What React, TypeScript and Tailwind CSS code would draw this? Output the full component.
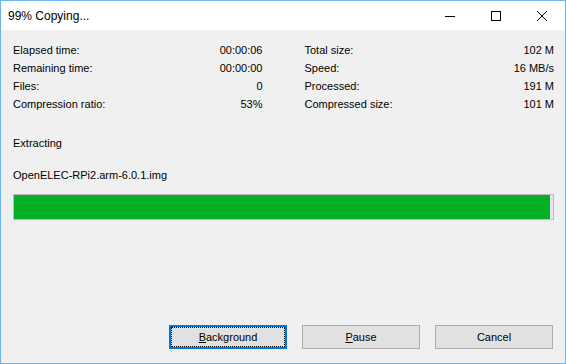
import React from 'react';

const font = { fontFamily: '"Liberation Sans", Arial, sans-serif' };

const leftRows: [string, string][] = [
  ['Elapsed time:', '00:00:06'],
  ['Remaining time:', '00:00:00'],
  ['Files:', '0'],
  ['Compression ratio:', '53%'],
];

const rightRows: [string, string][] = [
  ['Total size:', '102 M'],
  ['Speed:', '16 MB/s'],
  ['Processed:', '191 M'],
  ['Compressed size:', '101 M'],
];

const StatColumn: React.FC<{ rows: [string, string][] }> = ({ rows }) => (
  <div className="flex flex-col">
    {rows.map(([label, value]) => (
      <div key={label} className="flex h-[18px] items-center justify-between">
        <span>{label}</span>
        <span>{value}</span>
      </div>
    ))}
  </div>
);

export default function App() {
  return (
    <div
      className="flex h-[364px] w-[566px] flex-col border border-[#6DB5EC] bg-[#F0F0F0] text-[11px] text-black"
      style={font}
    >
      {/* title bar */}
      <div className="flex h-[29px] shrink-0 items-center bg-white">
        <span className="ml-[7px] text-[12px]">99% Copying...</span>
        <div className="ml-auto flex h-full items-center">
          <div className="flex h-full w-[46px] items-center justify-center">
            <svg width="10" height="10" viewBox="0 0 10 10">
              <path d="M0 5.5H10" stroke="#000" strokeWidth="1" />
            </svg>
          </div>
          <div className="flex h-full w-[46px] items-center justify-center">
            <svg width="10" height="10" viewBox="0 0 10 10">
              <rect x="0.5" y="0.5" width="9" height="9" fill="none" stroke="#000" strokeWidth="1" />
            </svg>
          </div>
          <div className="flex h-full w-[46px] items-center justify-center">
            <svg width="10" height="10" viewBox="0 0 10 10">
              <path d="M0 0L10 10M10 0L0 10" stroke="#000" strokeWidth="1" />
            </svg>
          </div>
        </div>
      </div>

      {/* body */}
      <div className="flex flex-1 flex-col pl-[12px] pr-[11px] pt-[11px] pb-[14px]">
        <div className="grid grid-cols-2 gap-x-[42px]">
          <StatColumn rows={leftRows} />
          <StatColumn rows={rightRows} />
        </div>

        <div className="mt-[21px] flex h-[18px] items-center">Extracting</div>
        <div className="mt-[14px] flex h-[18px] items-center">OpenELEC-RPi2.arm-6.0.1.img</div>

        <div className="mt-[10px] h-[26px] border border-[#BCBCBC] bg-[#E6E6E6]">
          <div className="h-full w-[99.4%] bg-[#06B025]" />
        </div>

        <div className="mt-auto flex justify-end gap-[15px] pr-px">
          <button className="relative h-[24px] w-[118px] border-2 border-[#0078D7] bg-[#E1E1E1]">
            <span className="absolute inset-0 border border-dotted border-black" />
            <span className="relative"><u>B</u>ackground</span>
          </button>
          <button className="h-[24px] w-[118px] border border-[#ADADAD] bg-[#E1E1E1]">
            <u>P</u>ause
          </button>
          <button className="h-[24px] w-[118px] border border-[#ADADAD] bg-[#E1E1E1]">
            Cancel
          </button>
        </div>
      </div>
    </div>
  );
}
